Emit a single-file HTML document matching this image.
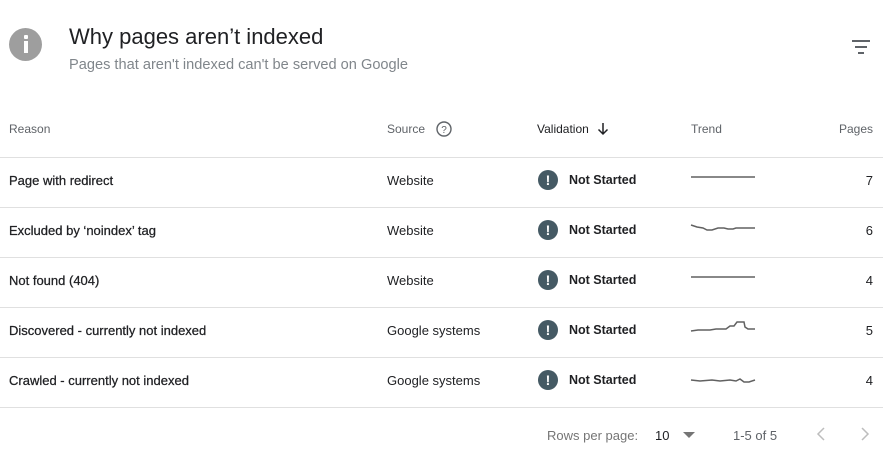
<!DOCTYPE html><html><head><style>
body{margin:0;width:883px;height:454px;background:#fff;font-family:"Liberation Sans",sans-serif;position:relative;overflow:hidden}
.a{position:absolute;white-space:nowrap}
.h{font-size:12px;color:#5f6368;top:122px}
.r{font-size:13px;color:#202124}
.m{-webkit-text-stroke:0.25px #202124}
.line{position:absolute;left:0;width:883px;height:1px;background:#e0e0e0}
.ic{position:absolute;left:538px;width:20px;height:20px;border-radius:50%;background:#455a64;color:#fff;font-weight:bold;font-size:14px;text-align:center;line-height:20px}
</style></head><body>
<div class="a" style="left:9px;top:28px;width:33px;height:33px;border-radius:50%;background:#9e9e9e"></div>
<div class="a" style="left:24px;top:35px;width:4px;height:4px;background:#fff;border-radius:1px"></div>
<div class="a" style="left:24px;top:41px;width:4px;height:12px;background:#fff"></div>
<div class="a" style="left:69px;top:24px;font-size:22px;color:#202124">Why pages aren’t indexed</div>
<div class="a" style="left:69px;top:57px;font-size:14.6px;color:#80868b">Pages that aren't indexed can't be served on Google</div>
<svg class="a" style="left:850px;top:39px" width="22" height="16"><path d="M2 2h18M5 8h12M8 14h6" stroke="#5f6368" stroke-width="2"/></svg>
<div class="a h" style="left:9px">Reason</div>
<div class="a h" style="left:387px">Source</div>
<svg class="a" style="left:435px;top:120px" width="18" height="18"><circle cx="9" cy="9" r="7" fill="none" stroke="#5f6368" stroke-width="1.4"/><text x="9" y="13" font-size="10" text-anchor="middle" fill="#5f6368" font-family="Liberation Sans">?</text></svg>
<div class="a h" style="left:537px;color:#202124">Validation</div>
<svg class="a" style="left:596px;top:122px" width="14" height="14"><path d="M7 1v11M2.5 7.5L7 12l4.5-4.5" fill="none" stroke="#202124" stroke-width="1.5"/></svg>
<div class="a h" style="left:691px">Trend</div>
<div class="a h" style="right:10px">Pages</div>
<div class="line" style="top:157px"></div><div class="line" style="top:207px"></div><div class="line" style="top:257px"></div><div class="line" style="top:307px"></div><div class="line" style="top:357px"></div><div class="line" style="top:407px"></div>

<div class="a r m" style="left:9px;top:173px">Page with redirect</div>
<div class="a r m" style="left:9px;top:223px">Excluded by ‘noindex’ tag</div>
<div class="a r m" style="left:9px;top:273px">Not found (404)</div>
<div class="a r m" style="left:9px;top:323px">Discovered - currently not indexed</div>
<div class="a r m" style="left:9px;top:373px">Crawled - currently not indexed</div>
<div class="a r" style="left:387px;top:173px">Website</div>
<div class="a r" style="left:387px;top:223px">Website</div>
<div class="a r" style="left:387px;top:273px">Website</div>
<div class="a r" style="left:387px;top:323px">Google systems</div>
<div class="a r" style="left:387px;top:373px">Google systems</div>

<div class="ic" style="top:170px">!</div><div class="ic" style="top:220px">!</div><div class="ic" style="top:270px">!</div><div class="ic" style="top:320px">!</div><div class="ic" style="top:370px">!</div>
<div class="a r" style="left:569px;top:173px;font-weight:bold;font-size:12.5px">Not Started</div>
<div class="a r" style="left:569px;top:223px;font-weight:bold;font-size:12.5px">Not Started</div>
<div class="a r" style="left:569px;top:273px;font-weight:bold;font-size:12.5px">Not Started</div>
<div class="a r" style="left:569px;top:323px;font-weight:bold;font-size:12.5px">Not Started</div>
<div class="a r" style="left:569px;top:373px;font-weight:bold;font-size:12.5px">Not Started</div>

<svg class="a" style="left:0;top:0" width="883" height="454"><g fill="none" stroke="#616161" stroke-width="1.5">
<path d="M691 177H755"/>
<path d="M691 225L697 227L703 228L707 230L712 230L718 228L724 228L728 229L733 229L736 228L755 228"/>
<path d="M691 277H755"/>
<path d="M691 331L698 330L710 330L716 329L726 329L730 326L734 326L737 322L744 322L745 327L748 329L755 329"/>
<path d="M691 380L700 381L712 380L720 381L730 380L736 381L740 379L744 382L749 382L755 380"/>
</g></svg>
<div class="a r" style="right:10px;top:173px">7</div>
<div class="a r" style="right:10px;top:223px">6</div>
<div class="a r" style="right:10px;top:273px">4</div>
<div class="a r" style="right:10px;top:323px">5</div>
<div class="a r" style="right:10px;top:373px">4</div>

<div class="a" style="left:547px;top:428px;font-size:13px;color:#757575">Rows per page:</div>
<div class="a" style="left:655px;top:428px;font-size:13px;color:#202124">10</div>
<svg class="a" style="left:682px;top:431px" width="14" height="8"><path d="M1 1h12L7 7z" fill="#757575"/></svg>
<div class="a" style="left:733px;top:428px;font-size:13px;color:#5f6368">1-5 of 5</div>
<svg class="a" style="left:814px;top:426px" width="14" height="16"><path d="M10 2L4 8l6 6" fill="none" stroke="#bdbdbd" stroke-width="1.5"/></svg>
<svg class="a" style="left:858px;top:426px" width="14" height="16"><path d="M4 2l6 6-6 6" fill="none" stroke="#bdbdbd" stroke-width="1.5"/></svg>
</body></html>
